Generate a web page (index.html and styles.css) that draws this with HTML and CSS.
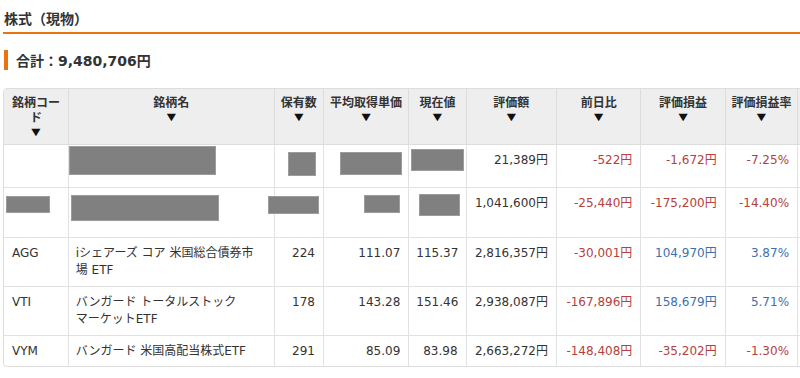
FILE: index.html
```html
<!DOCTYPE html>
<html lang="ja">
<head>
<meta charset="utf-8">
<title>株式（現物）</title>
<link rel="stylesheet" href="styles.css">
</head>
<body>
<div class="page">
  <h2 class="section-title">株式（現物）</h2>
  <div class="total"><span class="total-bar"></span><span class="total-text">合計：9,480,706円</span></div>
  <div class="table-wrap">
    <table class="holdings">
      <colgroup>
        <col class="c-code"><col class="c-name"><col class="c-qty"><col class="c-avg"><col class="c-cur"><col class="c-val"><col class="c-day"><col class="c-pl"><col class="c-rate"><col class="c-extra">
      </colgroup>
      <thead>
        <tr>
          <th>銘柄コード<span class="sort">▼</span></th>
          <th>銘柄名<span class="sort">▼</span></th>
          <th>保有数<span class="sort">▼</span></th>
          <th>平均取得単価<span class="sort">▼</span></th>
          <th>現在値<span class="sort">▼</span></th>
          <th>評価額<span class="sort">▼</span></th>
          <th>前日比<span class="sort">▼</span></th>
          <th>評価損益<span class="sort">▼</span></th>
          <th>評価損益率<span class="sort">▼</span></th>
          <th></th>
        </tr>
      </thead>
      <tbody>
        <tr class="r-short">
          <td></td><td></td><td class="num"></td><td class="num"></td><td class="num"></td>
          <td class="num">21,389円</td>
          <td class="num neg">-522円</td>
          <td class="num neg">-1,672円</td>
          <td class="num neg">-7.25%</td>
          <td></td>
        </tr>
        <tr class="r-tall">
          <td></td><td></td><td class="num"></td><td class="num"></td><td class="num"></td>
          <td class="num">1,041,600円</td>
          <td class="num neg">-25,440円</td>
          <td class="num neg">-175,200円</td>
          <td class="num neg">-14.40%</td>
          <td></td>
        </tr>
        <tr>
          <td class="code">AGG</td>
          <td class="name">iシェアーズ コア 米国総合債券市<br>場 ETF</td>
          <td class="num">224</td>
          <td class="num">111.07</td>
          <td class="num">115.37</td>
          <td class="num">2,816,357円</td>
          <td class="num neg">-30,001円</td>
          <td class="num pos">104,970円</td>
          <td class="num pos">3.87%</td>
          <td></td>
        </tr>
        <tr>
          <td class="code">VTI</td>
          <td class="name">バンガード トータルストック<br>マーケットETF</td>
          <td class="num">178</td>
          <td class="num">143.28</td>
          <td class="num">151.46</td>
          <td class="num">2,938,087円</td>
          <td class="num neg">-167,896円</td>
          <td class="num pos">158,679円</td>
          <td class="num pos">5.71%</td>
          <td></td>
        </tr>
        <tr>
          <td class="code">VYM</td>
          <td class="name">バンガード 米国高配当株式ETF</td>
          <td class="num">291</td>
          <td class="num">85.09</td>
          <td class="num">83.98</td>
          <td class="num">2,663,272円</td>
          <td class="num neg">-148,408円</td>
          <td class="num neg">-35,202円</td>
          <td class="num neg">-1.30%</td>
          <td></td>
        </tr>
      </tbody>
    </table>
    <span class="redact" style="left:65px;top:57px;width:147px;height:29px"></span>
    <span class="redact" style="left:284px;top:63px;width:28px;height:24px"></span>
    <span class="redact" style="left:336px;top:63px;width:62px;height:23px"></span>
    <span class="redact" style="left:407px;top:60px;width:53px;height:22px"></span>
    <span class="redact" style="left:2px;top:107px;width:44px;height:17px"></span>
    <span class="redact" style="left:67px;top:106px;width:148px;height:26px"></span>
    <span class="redact" style="left:264px;top:107px;width:51px;height:18px"></span>
    <span class="redact" style="left:360px;top:106px;width:36px;height:18px"></span>
    <span class="redact" style="left:415px;top:105px;width:41px;height:22px"></span>
  </div>
</div>
</body>
</html>
```

FILE: styles.css
```css
html, body {
  margin: 0;
  padding: 0;
  background: #fff;
  overflow: hidden;
}
body {
  font-family: "DejaVu Sans", "Noto Sans CJK JP", sans-serif;
  font-size: 12px;
  color: #333;
}
.page {
  padding: 0 0 0 3px;
  width: 900px;
}
.section-title {
  margin: 0;
  width: 797px;
  font-size: 14px;
  font-weight: bold;
  line-height: 20px;
  padding: 9px 0 3px 1px;
  border-bottom: 2px solid #e9730e;
  color: #333;
}
.total {
  display: flex;
  align-items: center;
  gap: 8px;
  margin-top: 16px;
  height: 20px;
  padding-left: 1px;
}
.total-bar {
  display: block;
  width: 4px;
  height: 20px;
  background: #e9730e;
}
.total-text {
  font-size: 14px;
  font-weight: bold;
  color: #333;
}
.table-wrap {
  position: relative;
  margin-top: 18px;
  width: 876px;
  border: 1px solid #dddddd;
  border-radius: 4px;
  overflow: hidden;
}
.holdings {
  border-collapse: collapse;
  table-layout: fixed;
  width: 876px;
}
.c-code { width: 64px; }
.c-name { width: 205px; }
.c-qty { width: 49px; }
.c-avg { width: 85px; }
.c-cur { width: 57px; }
.c-val { width: 90px; }
.c-day { width: 84px; }
.c-pl { width: 84px; }
.c-rate { width: 72px; }
.c-extra { width: 82px; }
.holdings th {
  background: #eeeeee;
  font-family: "Noto Sans CJK JP", sans-serif;
  font-weight: bold;
  font-size: 12px;
  line-height: 15px;
  color: #333;
  text-align: center;
  vertical-align: top;
  padding: 5px 3px 0;
  height: 50px;
  border-left: 1px solid #dddddd;
  border-bottom: 1px solid #dddddd;
}
.holdings th:first-child,
.holdings td:first-child { border-left: none; }
.sort {
  display: block;
  font-family: "DejaVu Sans", sans-serif;
  font-size: 12px;
  line-height: 16px;
  transform: scaleY(0.8);
  color: #111;
}
.holdings td {
  vertical-align: top;
  padding: 7px 8px 6px 7px;
  line-height: 17px;
  border-left: 1px solid #e2e2e2;
  border-top: 1px solid #e2e2e2;
  color: #333;
  white-space: nowrap;
}
.holdings tbody tr:first-child td { border-top: none; }
.holdings td.code { padding-left: 8px; }
.holdings td.num { text-align: right; }
.holdings td.neg { color: #b5403d; }
.holdings td.pos { color: #3d6fae; }
.holdings tr.r-short td { height: 29px; }
.holdings tr.r-tall td { height: 36px; }
.holdings tbody tr:nth-child(3) td,
.holdings tbody tr:nth-child(4) td { height: 35px; }
.redact {
  position: absolute;
  display: block;
  box-sizing: border-box;
  background: #808080;
  border: 1px solid #9c9c9c;
}
```
